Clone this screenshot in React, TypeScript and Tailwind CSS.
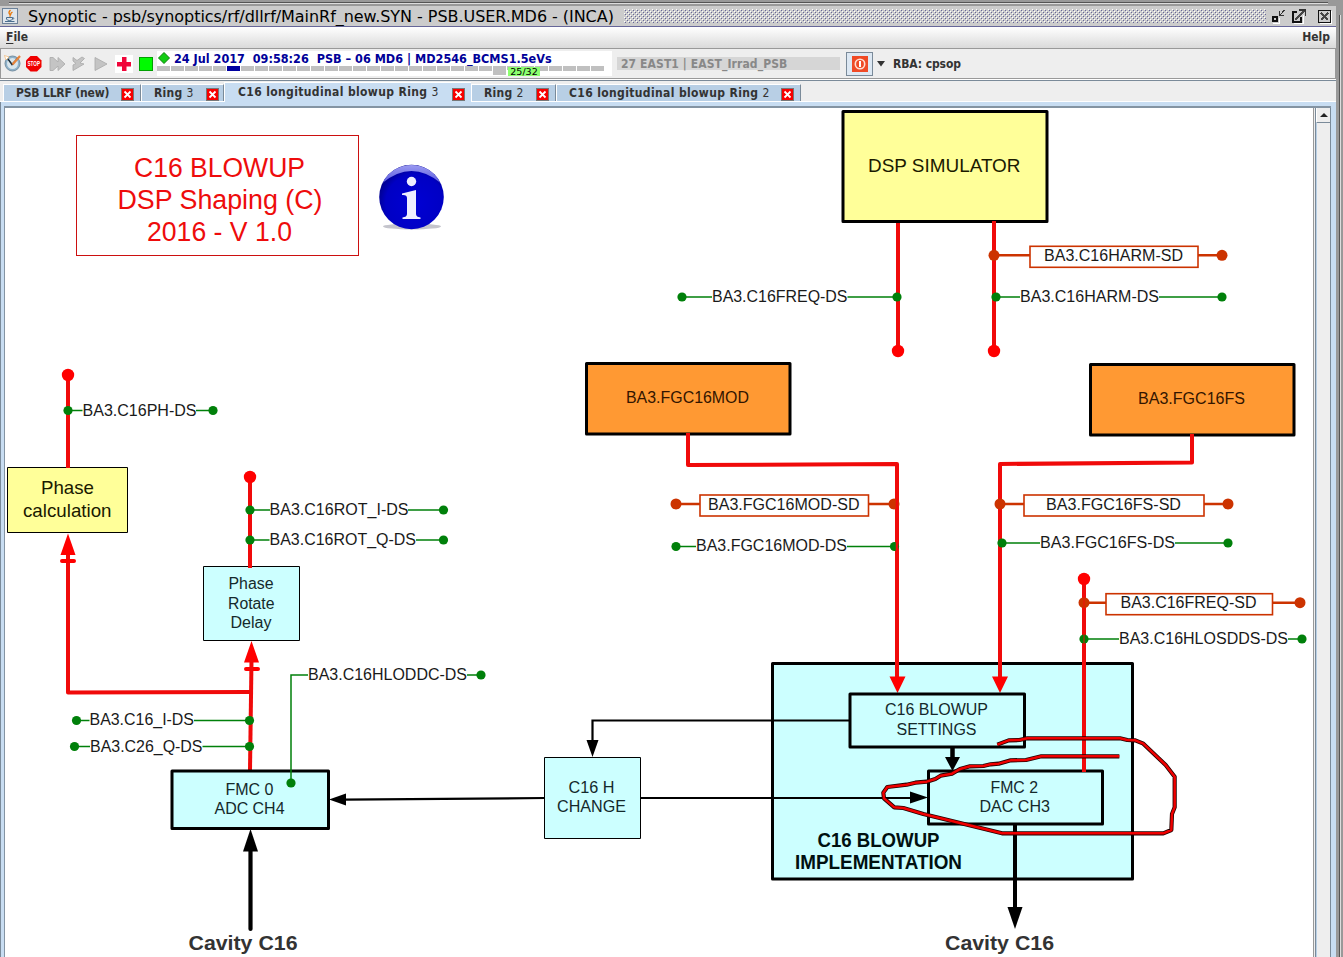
import React from "react";

const RED = "#f00a0a";
const RUST = "#cc3300";
const GREEN = "#00800a";
const CYAN = "#ccffff";

type LabelProps = {
  x: number;
  y: number;
  w: number;
  children: string;
  size?: number;
  fill?: string;
  bold?: boolean;
};

function Label({ x, y, w, children, size = 16, fill = "#1a1a1a", bold }: LabelProps) {
  return (
    <text
      x={x}
      y={y}
      textLength={w}
      lengthAdjust="spacingAndGlyphs"
      fontSize={size}
      fill={fill}
      fontWeight={bold ? 700 : 400}
    >
      {children}
    </text>
  );
}

type TapProps = { y: number; from: number; to: number; x: number; w: number };

/* Acquisition tap: thin green lead either side of the signal name. */
function Tap({ y, from, to, x, w }: TapProps) {
  return (
    <g>
      <path d={`M${from} ${y}H${x}M${x + w} ${y}H${to}`} stroke={GREEN} strokeWidth={1.5} />
      <circle cx={from} cy={y} r={4.6} fill={GREEN} />
      <circle cx={to} cy={y} r={4.6} fill={GREEN} />
    </g>
  );
}

type SetProps = {
  y: number;
  from: number;
  to: number;
  left: number;
  right: number;
  x: number;
  w: number;
  children: string;
};

/* Setting point: framed name between two rust coloured terminals. */
function SetPoint({ y, from, to, left, right, x, w, children }: SetProps) {
  return (
    <g>
      <path d={`M${from} ${y}H${left}M${right} ${y}H${to}`} stroke={RUST} strokeWidth={2.4} />
      <rect x={left} y={y - 9} width={right - left} height={21} fill="#fff" stroke={RUST} strokeWidth={1.6} />
      <circle cx={from} cy={y} r={5.5} fill={RUST} />
      <circle cx={to} cy={y} r={5.5} fill={RUST} />
      <Label x={x} y={y + 5.7} w={w}>
        {children}
      </Label>
    </g>
  );
}

type BoxProps = { x: number; y: number; w: number; h: number; fill: string; sw?: number };

function Box({ x, y, w, h, fill, sw = 3 }: BoxProps) {
  return <rect x={x} y={y} width={w} height={h} fill={fill} stroke="#000" strokeWidth={sw} strokeLinejoin="round" />;
}

const SCRIBBLE =
  "M742 284L776 271L808 270L832 265H1110L1132 270L1156 271L1180 281L1247 345L1274 380V472L1266 492L1264 540L1240 550H756L520 492L460 474L433 472L402 445L400 428L412 411L470 404L496 398L530 395L556 387L572 377L606 371L630 357L660 349L700 348L722 343L746 341L782 331L828 330L874 319H1108";

function Diagram() {
  return (
    <svg
      className="block h-[849px] w-[1308px] shrink-0 font-['Liberation_Sans',Arial,sans-serif]"
      viewBox="5 108 1308 849"
      fill="none"
    >
      <defs>
        <linearGradient id="gloss" x1="0" y1="0" x2="0" y2="1">
          <stop offset="0" stopColor="#9a9af0" />
          <stop offset="1" stopColor="#5a5ae0" />
        </linearGradient>
        <radialGradient id="ball" cx="0.55" cy="0.6" r="0.6">
          <stop offset="0" stopColor="#0000d4" />
          <stop offset="0.75" stopColor="#0000c4" />
          <stop offset="1" stopColor="#000088" />
        </radialGradient>
      </defs>

      <rect x={76.5} y={135.5} width={282} height={120} stroke="#cc1010" />
      <Label x={134} y={177} w={171} size={27} fill="#ee0c0c">C16 BLOWUP</Label>
      <Label x={117.5} y={209} w={205} size={27} fill="#ee0c0c">DSP Shaping (C)</Label>
      <Label x={147} y={241} w={145} size={27} fill="#ee0c0c">2016 - V 1.0</Label>

      <ellipse cx={412} cy={226.5} rx={29} ry={3} fill="#c4c4cc" />
      <circle cx={411.5} cy={197} r={32.3} fill="url(#ball)" />
      <path d="M382.5 183A32.3 32.3 0 0 1 440.500 183Q426 171 411.500 171T382.500 183Z" fill="url(#gloss)" />
      <circle cx={411.5} cy={181.5} r={4.7} fill="#eeeeff" />
      <path d="M402 193.500L416 190V214Q416 217 420.500 217.500V219H402.500V217.500Q407 217 407 214V198Q407 194.500 402 195Z" fill="#eeeeff" />

      <Box x={843} y={111.5} w={204} h={110} fill="#ffff99" />
      <Label x={868} y={171.5} w={152.5} size={18.6} fill="#1a1a00">DSP SIMULATOR</Label>
      <path d="M898 223V351M994 221V351" stroke={RED} strokeWidth={4} />
      <circle cx={898} cy={351} r={6.2} fill="#f00" />
      <circle cx={994} cy={351} r={6.2} fill="#f00" />
      <SetPoint y={255.3} from={994} to={1222} left={1030} right={1198} x={1044} w={139}>BA3.C16HARM-SD</SetPoint>
      <Tap y={297} from={682} to={897} x={712} w={135.5} />
      <Label x={712} y={302} w={135.5}>BA3.C16FREQ-DS</Label>
      <Tap y={297} from={996} to={1222} x={1020} w={139} />
      <Label x={1020} y={302} w={139}>BA3.C16HARM-DS</Label>

      <Box x={586.5} y={363.5} w={203.5} h={70.5} fill="#ff9933" />
      <Label x={626} y={403} w={123} fill="#331500">BA3.FGC16MOD</Label>
      <Box x={1090.5} y={364.5} w={203.5} h={70.5} fill="#ff9933" />
      <Label x={1138} y={404} w={107} fill="#331500">BA3.FGC16FS</Label>

      <Box x={772.5} y={663.5} w={360} h={215.5} fill={CYAN} />

      <path d="M688 433V465L897 464V678" stroke={RED} strokeWidth={4} strokeLinejoin="round" />
      <path d="M1192 434V462.500L1000 464V678" stroke={RED} strokeWidth={4} strokeLinejoin="round" />
      <path d="M889.500 676.500H905.500L897.500 693ZM992 676.500H1008L1000 693Z" fill="#f00" />
      <SetPoint y={504} from={676} to={894} left={700} right={868.5} x={708} w={151.5}>BA3.FGC16MOD-SD</SetPoint>
      <Tap y={546.5} from={676} to={894.5} x={696} w={151} />
      <Label x={696} y={551} w={151}>BA3.FGC16MOD-DS</Label>
      <path d="M897 490V555" stroke={RED} strokeWidth={2.5} />
      <SetPoint y={504} from={1000} to={1228} left={1024} right={1204} x={1046} w={135}>BA3.FGC16FS-SD</SetPoint>
      <Tap y={543} from={1002} to={1228} x={1040} w={135} />
      <Label x={1040} y={548} w={135}>BA3.FGC16FS-DS</Label>

      <Box x={850} y={694} w={174.5} h={53} fill={CYAN} />
      <Label x={885} y={715} w={103} fill="#14292b">C16 BLOWUP</Label>
      <Label x={896.5} y={734.5} w={80} fill="#14292b">SETTINGS</Label>
      <Box x={928.5} y={771} w={174} h={53} fill={CYAN} />
      <Label x={990.5} y={792.5} w={47.5} fill="#14292b">FMC 2</Label>
      <Label x={979.5} y={811.5} w={70.5} fill="#14292b">DAC CH3</Label>

      <path d="M1084 579V772" stroke={RED} strokeWidth={4} />
      <circle cx={1084} cy={579} r={6.2} fill="#f00" />
      <SetPoint y={602.7} from={1084} to={1300} left={1106} right={1272.5} x={1120.5} w={136}>BA3.C16FREQ-SD</SetPoint>
      <Tap y={639} from={1084} to={1302} x={1119} w={169} />
      <path d="M1084 590V645" stroke={RED} strokeWidth={2} opacity={0.45} />
      <Label x={1119} y={643.5} w={169}>BA3.C16HLOSDDS-DS</Label>

      <path d="M952.500 747V760" stroke="#000" strokeWidth={4.5} />
      <path d="M945 757H960L952.500 771Z" fill="#000" />
      <path d="M850 720.500H592.500V742" stroke="#000" strokeWidth={2.2} />
      <path d="M586.500 740H598.500L592.500 757Z" fill="#000" />
      <path d="M640 798H912" stroke="#000" strokeWidth={2.2} />
      <path d="M910 791.500V803.500L928 797.500Z" fill="#000" />
      <path d="M545 798L344 799.700" stroke="#000" strokeWidth={2.2} />
      <path d="M346 793.500V805.500L329 799.500Z" fill="#000" />
      <path d="M1015 823V910" stroke="#000" strokeWidth={4} />
      <path d="M1007.500 907H1022.500L1015 929Z" fill="#000" />
      <Label x={817.5} y={846.5} w={122} size={19.5} bold fill="#001010">C16 BLOWUP</Label>
      <Label x={795} y={868.5} w={167} size={19.5} bold fill="#001010">IMPLEMENTATION</Label>
      <Label x={945} y={949.5} w={109} size={20.5} bold fill="#333">Cavity C16</Label>

      <Box x={544.5} y={757.5} w={96} h={81} fill={CYAN} sw={1} />
      <Label x={568.5} y={793} w={46} fill="#14292b">C16 H</Label>
      <Label x={557} y={812} w={69} fill="#14292b">CHANGE</Label>

      <Box x={7.5} y={467.5} w={120} h={65} fill="#ffff99" sw={1} />
      <Label x={41} y={494} w={53} size={18.6} fill="#1a1a00">Phase</Label>
      <Label x={23} y={516.5} w={88.5} size={18.6} fill="#1a1a00">calculation</Label>
      <path d="M68 375V468" stroke={RED} strokeWidth={4} />
      <circle cx={68} cy={375} r={6.2} fill="#f00" />
      <Tap y={410.5} from={68} to={213} x={82.5} w={113.5} />
      <Label x={82.5} y={415.5} w={114}>BA3.C16PH-DS</Label>
      <path d="M68 553V692.500L250 692" stroke={RED} strokeWidth={4} strokeLinejoin="round" />
      <path d="M62 561H74M246 669H258" stroke="#f00" strokeWidth={4} strokeLinecap="round" />
      <path d="M60.500 555H75.500L68 533.500ZM244 662.500H259L251.500 641Z" fill="#f00" />

      <Box x={203.5} y={566.5} w={96} h={74} fill={CYAN} sw={1} />
      <Label x={228.5} y={589} w={45} fill="#14292b">Phase</Label>
      <Label x={228} y={608.5} w={46.5} fill="#14292b">Rotate</Label>
      <Label x={230.5} y={627.5} w={41} fill="#14292b">Delay</Label>
      <path d="M250 477V568" stroke={RED} strokeWidth={4} />
      <circle cx={250} cy={477} r={6.2} fill="#f00" />
      <Tap y={510} from={250} to={443.5} x={270} w={138} />
      <Label x={269.5} y={514.5} w={139}>BA3.C16ROT_I-DS</Label>
      <Tap y={540} from={250} to={443.5} x={269.5} w={146.5} />
      <Label x={269.5} y={544.5} w={146.5}>BA3.C16ROT_Q-DS</Label>

      <path d="M251.500 660L250 770" stroke={RED} strokeWidth={4} />
      <Tap y={720.5} from={76.5} to={249.5} x={89.5} w={104.5} />
      <Label x={89.5} y={725} w={104.5}>BA3.C16_I-DS</Label>
      <Tap y={746.5} from={74.5} to={249.5} x={90} w={112.5} />
      <Label x={90} y={752} w={112.5}>BA3.C26_Q-DS</Label>

      <Box x={172} y={771} w={156.5} h={57.5} fill={CYAN} />
      <Label x={225.5} y={795} w={48} fill="#14292b">FMC 0</Label>
      <Label x={214.5} y={814} w={70} fill="#14292b">ADC CH4</Label>
      <path d="M291 783V675H308M467 675H481" stroke={GREEN} strokeWidth={1.5} />
      <circle cx={291} cy={783} r={4.6} fill={GREEN} />
      <circle cx={481} cy={675} r={4.6} fill={GREEN} />
      <Label x={308} y={679.5} w={159}>BA3.C16HLODDC-DS</Label>
      <path d="M250.500 929V850" stroke="#000" strokeWidth={4.2} strokeLinecap="round" />
      <path d="M243 851.500H258L250.500 829Z" fill="#000" />
      <Label x={188.5} y={949.5} w={109} size={20.5} bold fill="#333">Cavity C16</Label>

      <g transform="translate(750 650) scale(0.33333)" strokeLinejoin="round">
        <path d={SCRIBBLE} stroke="#200" strokeWidth={12.5} strokeLinecap="butt" />
        <path d={SCRIBBLE} stroke="#f00000" strokeWidth={7.5} strokeLinecap="butt" />
      </g>
    </svg>
  );
}

function TitleBar() {
  return (
    <div className="flex h-[20px] shrink-0 items-center bg-[#cccccc] pl-[2px] pr-[4px]">
      <svg className="h-4 w-4 shrink-0" viewBox="0 0 16 16" fill="none">
        <rect x="0.500" y="0.500" width="15" height="15" fill="#dfe6ec" stroke="#6d8299" />
        <path d="M8.500 2Q6 4.500 7.500 6T7.500 8.500M10.500 4Q8 5.500 9 7" stroke="#e8780a" strokeWidth="1.300" />
        <path d="M4.500 9.500H10.500V11Q10 12.500 7.500 12.500T4.500 11ZM10.500 10Q13 9.500 11 11.500M3 13.500H12.500" stroke="#4a6e8e" />
      </svg>
      <span className="ml-[10px] mt-px w-[587px] shrink-0 whitespace-nowrap font-['DejaVu_Sans',sans-serif] text-[16px] leading-[20px] tracking-[-0.045px] text-black">
        Synoptic - psb/synoptics/rf/dllrf/MainRf_new.SYN - PSB.USER.MD6 - (INCA)
      </span>
      <svg className="ml-[9px] h-[14px] w-[642px] shrink-0" shapeRendering="crispEdges">
        <defs>
          <pattern id="bumps" width="4" height="4" patternUnits="userSpaceOnUse">
            <rect width="1" height="1" fill="#ffffff" />
            <rect x="2" y="2" width="1" height="1" fill="#ffffff" />
            <rect x="1" y="1" width="1" height="1" fill="#666699" />
            <rect x="3" y="3" width="1" height="1" fill="#666699" />
          </pattern>
        </defs>
        <rect width="642" height="14" fill="url(#bumps)" />
      </svg>
      <svg className="ml-auto h-4 w-[62px] shrink-0" viewBox="0 0 62 16" fill="none" shapeRendering="crispEdges">
        <path d="M3 15.500H9.500V10M24 15.500H33.500V7M50 15.500H61.500V3" stroke="#fff" />
        <path d="M3 9H7V13H3Z" stroke="#111" strokeWidth="2" />
        <path d="M9.500 3V7.500H14M9.500 7.500L14.500 2" stroke="#333" />
        <path d="M27 4H23V14H31V9" stroke="#111" strokeWidth="2" />
        <path d="M25 12L34 3" stroke="#444" strokeWidth="2" />
        <path d="M29 2H35.500V8" stroke="#333" strokeWidth="1.500" />
        <path d="M48.500 2.500H60.500V14.500H48.500Z" stroke="#111" strokeWidth="1.500" />
        <path d="M51 5L58 12M58 5L51 12" stroke="#444" strokeWidth="1.600" />
      </svg>
    </div>
  );
}

const CYCLE_CELLS = Array.from({ length: 32 }, (_, i) => i);

function Toolbar() {
  return (
    <div className="flex h-[31px] w-[1336px] shrink-0 items-start border border-[#999999] bg-[#eeeeee] text-[12px] font-bold">
      <svg className="ml-[3px] mt-[6px] h-[17px] w-[17px] shrink-0" viewBox="0 0 17 17" fill="none">
        <circle cx="8.500" cy="8.500" r="7.500" fill="#8db1ca" stroke="#7790a2" />
        <circle cx="8.500" cy="8.500" r="5.500" fill="#d9e6ed" />
        <path d="M4 4L8 9.500L14 3" stroke="#1d2d38" strokeWidth="1.500" />
        <path d="M8.500 9.500L16 1" stroke="#e7843c" strokeWidth="2.200" />
        <path d="M0.500 0.500L5 2L2 5Z" fill="#fff" stroke="#f0a040" strokeWidth="0.500" />
      </svg>
      <svg className="ml-[5px] mt-[7px] h-[16px] w-[16px] shrink-0" viewBox="0 0 16 16">
        <path d="M4.500 0H11L15.500 4.500V11L11 15.500H4.500L0 11V4.500Z" fill="#f00000" />
        <text x="1.500" y="10.200" textLength="12.500" lengthAdjust="spacingAndGlyphs" fontSize="6.800" fontWeight="700" fill="#fff" fontFamily="Liberation Sans">
          STOP
        </text>
      </svg>
      <svg className="ml-[7px] mt-[7px] h-[16px] w-[58px] shrink-0" viewBox="0 0 58 16" fill="#c4c4c4" stroke="#aeaeae" strokeWidth="0.900">
        <path d="M1 1.500H4L9 6V1.500L16 8L9 14.500V10L4 14.500H1Z" />
        <path d="M24 1.500L28 4.500L33 1L35.500 2.500L31 7L35 8L24 14.500V9L27 7.500L24 5Z" />
        <path d="M46 1.500L58 8L46 14.500Z" />
      </svg>
      <span className="ml-[8px] mt-[6px] flex h-[18px] w-[18px] shrink-0 items-center justify-center bg-white">
        <svg className="h-[14px] w-[14px]" viewBox="0 0 14 14">
          <path d="M5 0H9.500V5H14V9.500H9.500V14H5V9.500H0V5H5Z" fill="#f0063a" />
        </svg>
      </span>
      <span className="ml-[6px] mt-[8px] h-[14px] w-[14px] shrink-0 border border-[#00a000] bg-[#00fa00]" />
      <div className="ml-[4px] mt-[2px] h-[25px] w-[455px] shrink-0 bg-white">
        <div className="flex h-[15px] items-start">
          <svg className="ml-[1px] mt-[1px] h-[13px] w-[12px] shrink-0" viewBox="0 0 12 13">
            <path d="M6 0.500L11.500 6L6 11.500L0.500 6Z" fill="#12cc12" stroke="#078007" />
          </svg>
          <span className="ml-[4px] whitespace-pre font-['DejaVu_Sans_Condensed','DejaVu_Sans',sans-serif] text-[12.5px] leading-[15px] tracking-[0.01px] text-[#000099]">
            {"24 Jul 2017  09:58:26  PSB – 06 MD6 | MD2546_BCMS1.5eVs"}
          </span>
        </div>
        <div className="flex h-[10px] items-start gap-px">
          {CYCLE_CELLS.map((i) =>
            i === 24 ? (
              <span key={i} className="h-[9px] w-[13px] shrink-0 bg-[#c0c0c0]" />
            ) : i === 25 ? (
              <span key={i} className="relative h-[4px] w-[13px] shrink-0 bg-[#c0c0c0]">
                <span className="absolute left-px top-px flex h-[9px] w-[32px] items-center justify-center bg-[#8cff6e] font-['DejaVu_Sans',sans-serif] text-[9.5px] font-normal leading-[9px] text-black">
                  25/32
                </span>
              </span>
            ) : (
              <span key={i} className={i === 5 ? "h-[5px] w-[13px] shrink-0 bg-[#0000a0]" : "h-[5px] w-[13px] shrink-0 bg-[#c0c0c0]"} />
            ),
          )}
        </div>
      </div>
      <div className="ml-[5px] mt-[8px] flex h-[13px] w-[223px] shrink-0 items-center whitespace-nowrap bg-[#d6d6d6] pl-[4px] text-[12px] tracking-[0.1px] text-[#888888]">
        27 EAST1 | EAST_Irrad_PSB
      </div>
      <div className="ml-[6px] mt-[3px] flex h-[24px] w-[27px] shrink-0 items-center justify-center border border-[#7a8a99] bg-[#dde8f3]">
        <svg className="h-4 w-4" viewBox="0 0 16 16" fill="none">
          <rect width="16" height="16" fill="#ef4a26" />
          <circle cx="8" cy="8" r="4.700" stroke="#ffe0d4" strokeWidth="1.600" />
          <path d="M8 5V11" stroke="#fff" strokeWidth="2" />
        </svg>
      </div>
      <svg className="ml-[4px] mt-[12px] h-[6px] w-[8px] shrink-0" viewBox="0 0 8 6">
        <path d="M0 0H8L4 5.500Z" fill="#333" />
      </svg>
      <span className="ml-[8px] mt-[8px] whitespace-nowrap leading-[15px] tracking-[-0.1px] text-[#333333]">RBA: cpsop</span>
    </div>
  );
}

function CloseBox() {
  return (
    <svg className="mt-[3px] h-[13px] w-[13px] shrink-0" viewBox="0 0 13 13">
      <rect x="0.500" y="0.500" width="12" height="12" fill="#f80000" stroke="#777" />
      <path d="M3.500 3.500L9.500 9.500M9.500 3.500L3.500 9.500" stroke="#fff" strokeWidth="1.800" />
    </svg>
  );
}

const TAB = "flex h-[17px] shrink-0 items-center whitespace-nowrap border-l border-t border-l-white border-t-white border-r border-r-[#7a8a99] bg-[#b8cfe5]";

function Tabs() {
  return (
    <div className="flex h-[21px] shrink-0 items-end border-b border-white bg-[#eeeeee] pl-[3px] text-[12px] font-bold leading-[15px] text-[#333333]">
      <div className={`${TAB} w-[138px] pl-[12px]`}>
        <span className="w-[105px] tracking-[-0.18px]">PSB LLRF (new)</span>
        <CloseBox />
      </div>
      <div className={`${TAB} w-[83px] pl-[12px]`}>
        <span className="w-[52px] tracking-[0.25px]">
          Ring <span className="font-normal">3</span>
        </span>
        <CloseBox />
      </div>
      <div className="relative -mb-px flex h-[20px] w-[247px] shrink-0 items-center whitespace-nowrap border-l border-t border-white bg-[#c8ddf2] pl-[13px]">
        <span className="w-[214px] tracking-[0.37px]">
          C16 longitudinal blowup Ring <span className="font-normal">3</span>
        </span>
        <CloseBox />
      </div>
      <div className={`${TAB} w-[85px] pl-[12px]`}>
        <span className="w-[52px] tracking-[0.25px]">
          Ring <span className="font-normal">2</span>
        </span>
        <CloseBox />
      </div>
      <div className={`${TAB} w-[245px] pl-[12px]`}>
        <span className="w-[212px] tracking-[0.37px]">
          C16 longitudinal blowup Ring <span className="font-normal">2</span>
        </span>
        <CloseBox />
      </div>
    </div>
  );
}

function ScrollBar() {
  return (
    <div className="flex w-[18px] shrink-0 flex-col border-l border-[#999999] bg-[#eeeeee] pl-px">
      <div className="flex grow flex-col border-x border-[#7a8a99]">
        <div className="flex h-[15px] shrink-0 items-center justify-center border-b border-[#7a8a99] border-l border-l-white">
          <svg className="h-[4px] w-[8px]" viewBox="0 0 8 4">
            <path d="M0 4L4 0L8 4Z" fill="#222" />
          </svg>
        </div>
        <div className="grow border-l border-[#b8cfe5]" />
      </div>
    </div>
  );
}

export default function App() {
  return (
    <div className="flex h-[957px] w-[1343px] overflow-hidden bg-[#999999] font-['DejaVu_Sans_Condensed','DejaVu_Sans',sans-serif]">
      <div className="flex w-[1336px] shrink-0 flex-col">
        <div className="h-[6px] shrink-0 pl-[9px] pt-[2px]">
          <div className="h-[2px] w-[1319px] border-b border-t border-b-[#dddddd] border-t-[#555555]" />
        </div>
        <TitleBar />
        <div className="flex h-[22px] shrink-0 items-center justify-between border-t border-[#666699] bg-linear-to-b from-white to-[#dadada] pb-px pl-[6px] pr-[6px] text-[12px] font-bold text-[#333333]">
          <span>
            <span className="underline underline-offset-2">F</span>ile
          </span>
          <span>Help</span>
        </div>
        <Toolbar />
        <div className="h-[2px] shrink-0 border-b border-b-[#7a8a99] bg-white" />
        <Tabs />
        <div className="flex min-h-0 grow border-l border-[#7a8a99] bg-[#c8ddf2] pl-[3px] pr-[5px] pt-[4px]">
          <div className="flex w-[1327px] shrink-0 overflow-hidden border-l border-t-2 border-[#8494a3] bg-white">
            <Diagram />
            <ScrollBar />
          </div>
        </div>
      </div>
      <div className="flex w-[7px] shrink-0 pl-[3px] pt-[15px]">
        <div className="w-[2px] border-l border-r border-l-[#555555] border-r-[#dddddd]" />
      </div>
    </div>
  );
}
